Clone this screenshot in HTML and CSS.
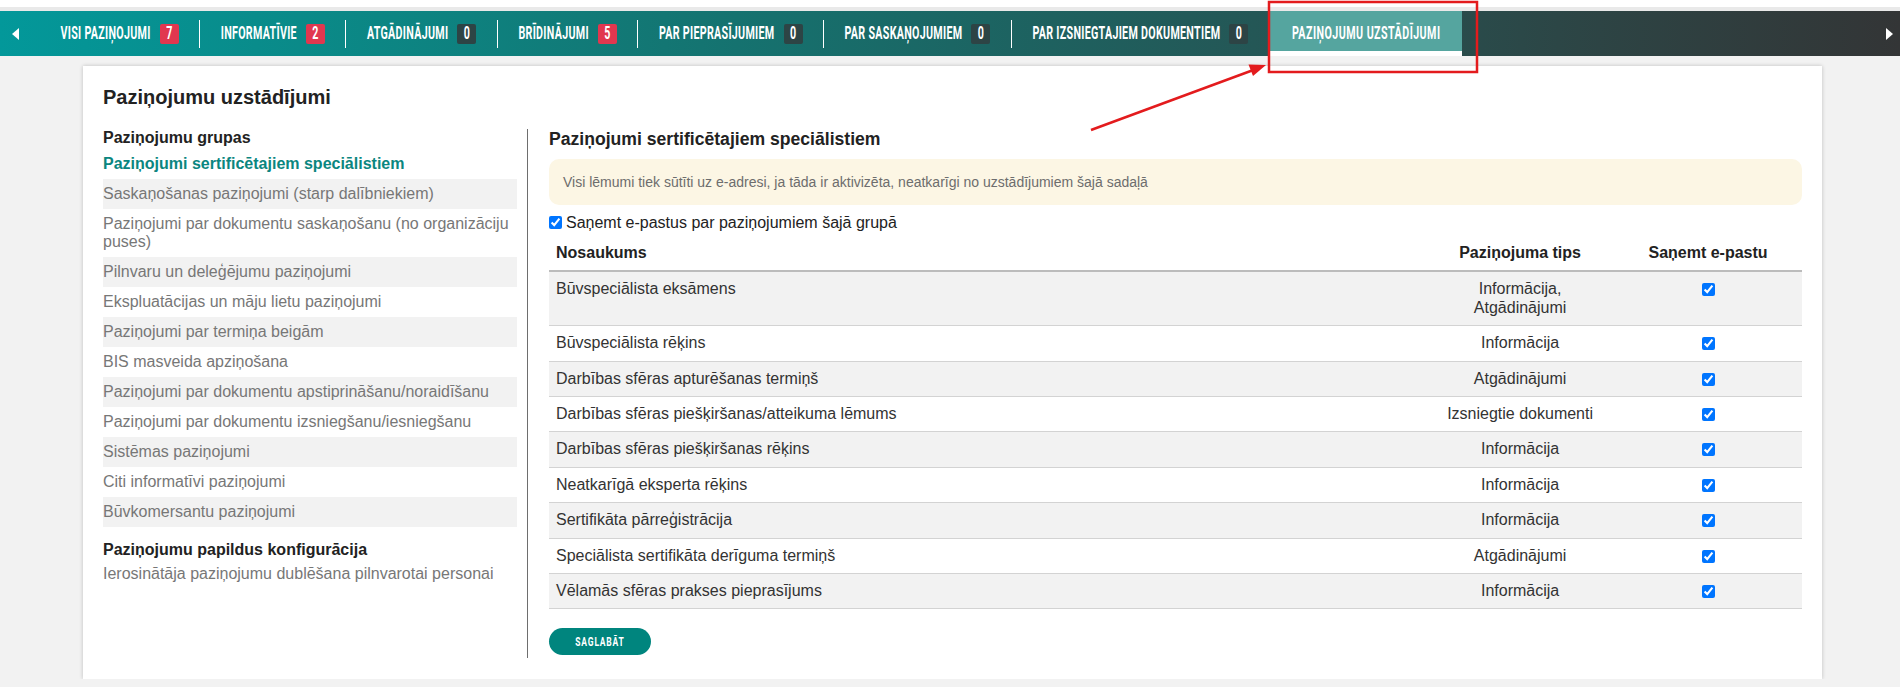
FILE: index.html
```html
<!DOCTYPE html>
<html lang="lv">
<head>
<meta charset="utf-8">
<title>Paziņojumu uzstādījumi</title>
<link rel="stylesheet" href="styles.css">
</head>
<body>
<div class="top-strip"></div>
<nav class="tabbar">
  <span class="scroll-btn scroll-left"><svg width="8" height="12" viewBox="0 0 8 12"><path d="M7 0 L0 6 L7 12 Z" fill="#fff"/></svg></span>
  <div class="tabs">
    <a class="tab"><span class="tab-label">Visi paziņojumi</span><span class="badge badge-red"><span class="badge-num">7</span></span></a>
    <span class="tab-sep"></span>
    <a class="tab"><span class="tab-label">Informatīvie</span><span class="badge badge-red"><span class="badge-num">2</span></span></a>
    <span class="tab-sep"></span>
    <a class="tab"><span class="tab-label">Atgādinājumi</span><span class="badge badge-dark"><span class="badge-num">0</span></span></a>
    <span class="tab-sep"></span>
    <a class="tab"><span class="tab-label">Brīdinājumi</span><span class="badge badge-red"><span class="badge-num">5</span></span></a>
    <span class="tab-sep"></span>
    <a class="tab"><span class="tab-label">Par pieprasījumiem</span><span class="badge badge-dark"><span class="badge-num">0</span></span></a>
    <span class="tab-sep"></span>
    <a class="tab"><span class="tab-label">Par saskaņojumiem</span><span class="badge badge-dark"><span class="badge-num">0</span></span></a>
    <span class="tab-sep"></span>
    <a class="tab"><span class="tab-label">Par izsniegtajiem dokumentiem</span><span class="badge badge-dark"><span class="badge-num">0</span></span></a>
    <span class="tab-sep"></span>
    <a class="tab tab-active"><span class="tab-label">Paziņojumu uzstādījumi</span></a>
  </div>
  <span class="scroll-btn scroll-right"><svg width="8" height="12" viewBox="0 0 8 12"><path d="M1 0 L8 6 L1 12 Z" fill="#fff"/></svg></span>
</nav>

<main class="card">
  <h1 class="card-title">Paziņojumu uzstādījumi</h1>
  <div class="settings">
    <aside class="groups">
      <h2 class="groups-title">Paziņojumu grupas</h2>
      <ul class="group-list striped">
        <li class="group-item active">Paziņojumi sertificētajiem speciālistiem</li>
        <li class="group-item">Saskaņošanas paziņojumi (starp dalībniekiem)</li>
        <li class="group-item">Paziņojumi par dokumentu saskaņošanu (no organizāciju puses)</li>
        <li class="group-item">Pilnvaru un deleģējumu paziņojumi</li>
        <li class="group-item">Ekspluatācijas un māju lietu paziņojumi</li>
        <li class="group-item">Paziņojumi par termiņa beigām</li>
        <li class="group-item">BIS masveida apziņošana</li>
        <li class="group-item">Paziņojumi par dokumentu apstiprināšanu/noraidīšanu</li>
        <li class="group-item">Paziņojumi par dokumentu izsniegšanu/iesniegšanu</li>
        <li class="group-item">Sistēmas paziņojumi</li>
        <li class="group-item">Citi informatīvi paziņojumi</li>
        <li class="group-item">Būvkomersantu paziņojumi</li>
      </ul>
      <h2 class="groups-title config-title">Paziņojumu papildus konfigurācija</h2>
      <ul class="group-list">
        <li class="group-item">Ierosinātāja paziņojumu dublēšana pilnvarotai personai</li>
      </ul>
    </aside>

    <section class="group-detail">
      <h2 class="detail-title">Paziņojumi sertificētajiem speciālistiem</h2>
      <div class="alert">Visi lēmumi tiek sūtīti uz e-adresi, ja tāda ir aktivizēta, neatkarīgi no uzstādījumiem šajā sadaļā</div>
      <label class="group-toggle"><input type="checkbox" checked>Saņemt e-pastus par paziņojumiem šajā grupā</label>
      <table class="notif-table">
        <thead>
          <tr><th class="col-name">Nosaukums</th><th class="col-type">Paziņojuma tips</th><th class="col-mail">Saņemt e-pastu</th></tr>
        </thead>
        <tbody>
          <tr><td>Būvspeciālista eksāmens</td><td class="c">Informācija, Atgādinājumi</td><td class="c"><input type="checkbox" checked></td></tr>
          <tr><td>Būvspeciālista rēķins</td><td class="c">Informācija</td><td class="c"><input type="checkbox" checked></td></tr>
          <tr><td>Darbības sfēras apturēšanas termiņš</td><td class="c">Atgādinājumi</td><td class="c"><input type="checkbox" checked></td></tr>
          <tr><td>Darbības sfēras piešķiršanas/atteikuma lēmums</td><td class="c">Izsniegtie dokumenti</td><td class="c"><input type="checkbox" checked></td></tr>
          <tr><td>Darbības sfēras piešķiršanas rēķins</td><td class="c">Informācija</td><td class="c"><input type="checkbox" checked></td></tr>
          <tr><td>Neatkarīgā eksperta rēķins</td><td class="c">Informācija</td><td class="c"><input type="checkbox" checked></td></tr>
          <tr><td>Sertifikāta pārreģistrācija</td><td class="c">Informācija</td><td class="c"><input type="checkbox" checked></td></tr>
          <tr><td>Speciālista sertifikāta derīguma termiņš</td><td class="c">Atgādinājumi</td><td class="c"><input type="checkbox" checked></td></tr>
          <tr><td>Vēlamās sfēras prakses pieprasījums</td><td class="c">Informācija</td><td class="c"><input type="checkbox" checked></td></tr>
        </tbody>
      </table>
      <button class="save-btn"><span class="save-label">Saglabāt</span></button>
    </section>
  </div>
</main>

<svg class="annotation" width="1900" height="687" viewBox="0 0 1900 687">
  <rect x="1269" y="2" width="208" height="70" fill="none" stroke="#e31b1d" stroke-width="2.5"/>
  <line x1="1091" y1="130" x2="1252" y2="70.5" stroke="#e31b1d" stroke-width="2.5"/>
  <polygon points="1266,65 1253,76 1248.5,64.5" fill="#e31b1d"/>
</svg>
</body>
</html>
```

FILE: styles.css
```css
html, body {
  margin: 0;
  padding: 0;
}
body {
  position: relative;
  background: #f2f2f2;
  font-family: "Liberation Sans", Arial, sans-serif;
  color: #222;
  overflow: hidden;
}

.top-strip {
  height: 7px;
  background: #fff;
  border-bottom: 4px solid #e9e9e9;
}

/* tab bar */
.tabbar {
  display: flex;
  align-items: stretch;
  height: 45px;
  background: linear-gradient(90deg, #03989a 0%, #0b8886 18%, #137673 35%, #1c6462 52%, #245756 66%, #2c4646 82%, #333536 100%);
}
.scroll-btn {
  display: flex;
  align-items: center;
  justify-content: center;
  flex: 0 0 auto;
}
.scroll-left {
  width: 40px;
  justify-content: flex-start;
  padding-left: 12px;
  box-sizing: border-box;
}
.scroll-right {
  width: 30px;
  justify-content: flex-end;
  padding-right: 7px;
  box-sizing: border-box;
}
.tabs {
  flex: 1;
  display: flex;
  align-items: center;
}
.tab {
  display: flex;
  flex: 0 0 auto;
  align-items: center;
  align-self: stretch;
  padding: 0 20.5px;
  color: #fff;
  text-decoration: none;
  font-family: Roboto, "Liberation Sans", sans-serif;
  font-weight: 700;
  font-size: 10.7px;
  letter-spacing: 0.3px;
  text-transform: uppercase;
  white-space: nowrap;
}
.tab-label,
.badge-num {
  display: inline-block;
  transform: scaleY(1.7);
}
.tab-sep {
  flex: 0 0 1px;
  height: 28px;
  background: #fff;
}
.tab-active {
  background: #55a59f;
  box-shadow: inset 0 -5px 0 #fff;
  padding: 0 21px 0 22px;
  letter-spacing: 0.45px;
}
.badge {
  display: inline-flex;
  flex: 0 0 auto;
  align-items: center;
  justify-content: center;
  min-width: 19px;
  height: 20px;
  margin-left: 9px;
  border-radius: 2px;
  letter-spacing: 0;
  box-sizing: border-box;
}
.badge-red { background: #e1374f; }
.badge-dark { background: #2d4445; }

/* card */
.card {
  display: block;
  width: 1739px;
  margin: 10px 0 0 83px;
  padding: 20px 20px 21px 20px;
  box-sizing: border-box;
  background: #fff;
  box-shadow: 0 0 4px rgba(0, 0, 0, 0.22);
}
.card-title {
  margin: 0 0 20px;
  font-size: 20px;
  font-weight: 700;
  color: #222;
}
.settings {
  display: flex;
  align-items: flex-start;
}

.groups {
  flex: 0 0 414px;
  margin-right: 10px;
}
.groups-title {
  margin: 0 0 2px;
  font-size: 16px;
  font-weight: 700;
  color: #222;
}
.config-title {
  margin-top: 14px;
  margin-bottom: 0;
}
.group-list {
  list-style: none;
  margin: 0;
  padding: 0;
}
.group-item {
  padding: 6px 0;
  line-height: 18px;
  font-size: 16px;
  color: #777;
}
.striped .group-item:nth-child(even) {
  background: #f2f2f2;
}
.group-item.active {
  color: #0b8680;
  font-weight: 700;
}

.group-detail {
  flex: 1;
  border-left: 1px solid #6e6e6e;
  padding: 0 0 3px 21px;
}
.detail-title {
  margin: 0 0 9px;
  font-size: 17.6px;
  font-weight: 700;
  color: #222;
}
.alert {
  padding: 15px 14px;
  font-size: 14px;
  line-height: 16px;
  color: #6d6d6d;
  background: #fcf6e4;
  border-radius: 10px;
  margin-bottom: 9px;
}
.group-toggle {
  display: block;
  font-size: 16px;
  color: #222;
}
.group-toggle input {
  margin: 0 4px 0 0;
  vertical-align: -1px;
}

.notif-table {
  width: 100%;
  margin-top: 4px;
  border-collapse: collapse;
  font-size: 16px;
  color: #333;
}
.notif-table th {
  padding: 8px 7px;
  line-height: 18.4px;
  font-weight: 700;
  color: #222;
  border-bottom: 2px solid #bcbcbc;
}
.notif-table th.col-name { text-align: left; }
.notif-table th.col-type,
.notif-table th.col-mail {
  width: 15%;
  text-align: center;
}
.notif-table td {
  padding: 8px 7px;
  line-height: 18.4px;
  vertical-align: top;
  border-bottom: 1px solid #d3d3d3;
}
.notif-table td.c { text-align: center; }
.notif-table tbody tr:nth-child(odd) { background: #f2f2f2; }
.notif-table td input {
  margin: 3px 0 0;
  vertical-align: top;
}

.save-btn {
  display: block;
  margin-top: 19px;
  width: 102px;
  height: 27px;
  border: 0;
  border-radius: 14px;
  background: #00857e;
  color: #fff;
  font-family: Roboto, "Liberation Sans", sans-serif;
  font-weight: 700;
  font-size: 8.5px;
  letter-spacing: 0.8px;
  text-transform: uppercase;
  padding: 0;
}
.save-label {
  display: inline-block;
  transform: scaleY(1.44);
}

/* screenshot annotation overlay */
.annotation {
  position: absolute;
  top: 0;
  left: 0;
  pointer-events: none;
}
```
